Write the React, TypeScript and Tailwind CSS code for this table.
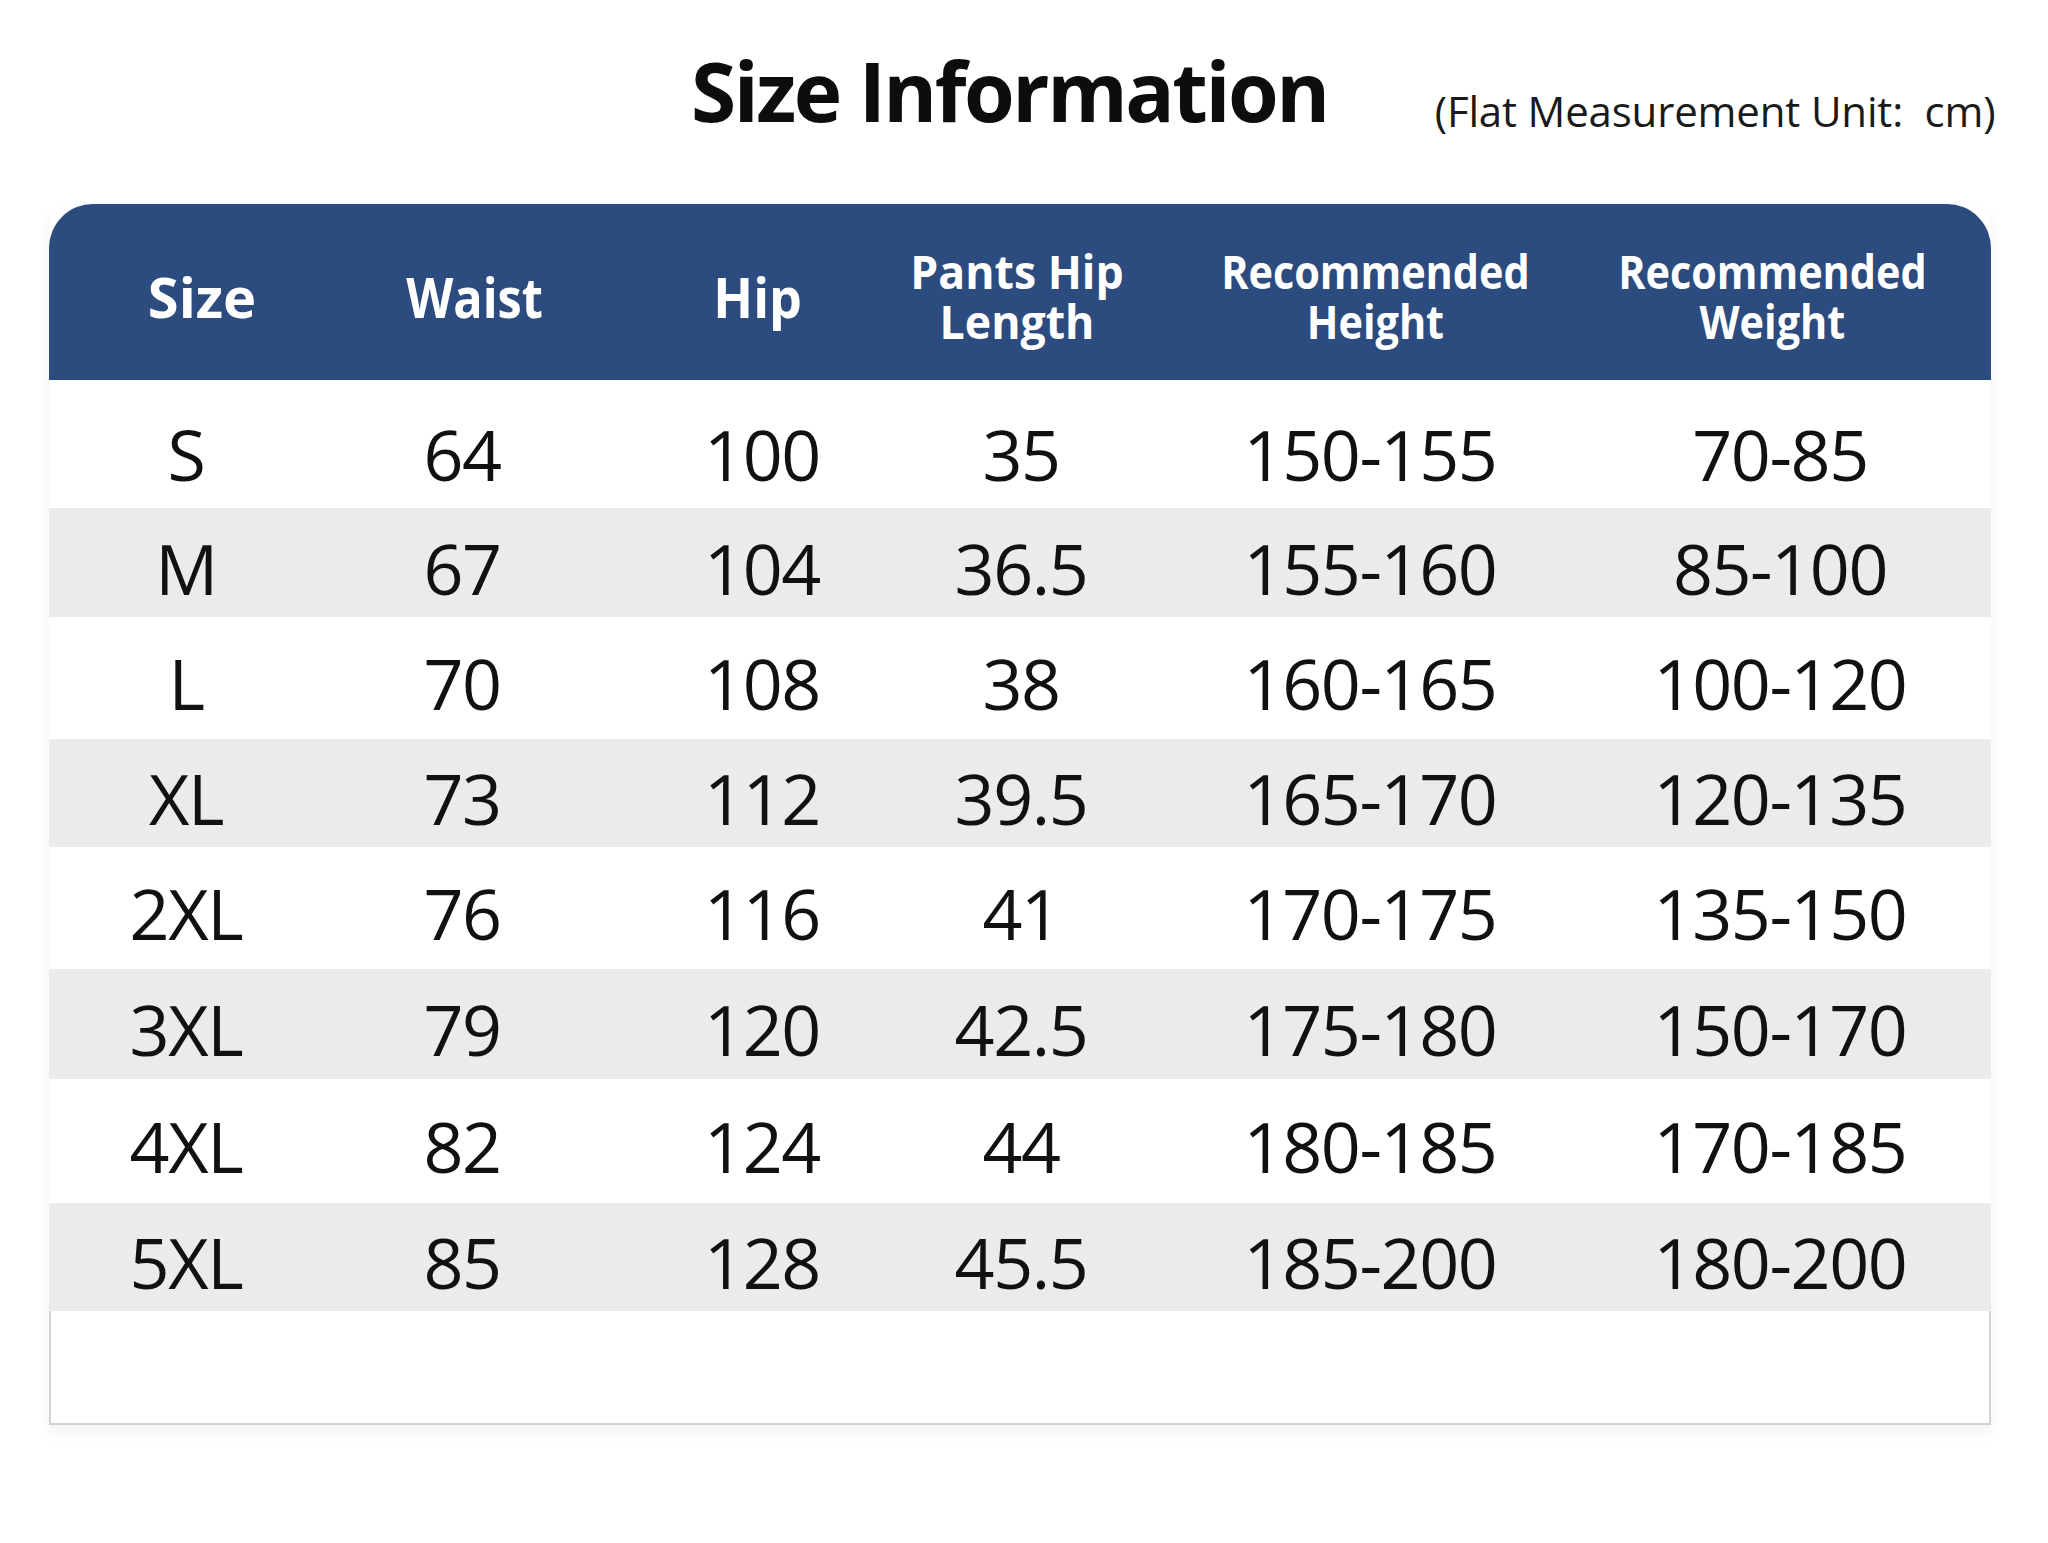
import React from "react";

const rows: { cells: string[]; gray: boolean; h: string; pt: string }[] = [
  { cells: ["S", "64", "100", "35", "150-155", "70-85"], gray: false, h: "h-[128px]", pt: "pt-[20px]" },
  { cells: ["M", "67", "104", "36.5", "155-160", "85-100"], gray: true, h: "h-[109px]", pt: "pt-[10px]" },
  { cells: ["L", "70", "108", "38", "160-165", "100-120"], gray: false, h: "h-[122px]", pt: "pt-[10px]" },
  { cells: ["XL", "73", "112", "39.5", "165-170", "120-135"], gray: true, h: "h-[108px]", pt: "pt-[10px]" },
  { cells: ["2XL", "76", "116", "41", "170-175", "135-150"], gray: false, h: "h-[122px]", pt: "pt-[10px]" },
  { cells: ["3XL", "79", "120", "42.5", "175-180", "150-170"], gray: true, h: "h-[110px]", pt: "pt-[10px]" },
  { cells: ["4XL", "82", "124", "44", "180-185", "170-185"], gray: false, h: "h-[124px]", pt: "pt-[10px]" },
  { cells: ["5XL", "85", "128", "45.5", "185-200", "180-200"], gray: true, h: "h-[108px]", pt: "pt-[10px]" },
];

const cols = "grid grid-cols-[274px_278px_322px_196px_502px_370px]";

function TwoLine({ a, b, narrow }: { a: string; b: string; narrow?: boolean }) {
  return (
    <div
      className={`flex flex-col items-center text-[46px] leading-[50px] whitespace-nowrap ${
        narrow ? "scale-x-[0.9]" : "scale-x-[0.97]"
      }`}
    >
      <span>{a}</span>
      <span>{b}</span>
    </div>
  );
}

export default function App() {
  return (
    <div className="w-[2048px] h-[1543px] bg-white overflow-hidden font-['Open_Sans','Noto_Sans',sans-serif] text-[#111111]">
      {/* Title row */}
      <div className="flex items-start pl-[691px] pt-[49px]">
        <h1 className="text-[82px] font-bold leading-none tracking-[-0.03em] text-[#0d0d0d]">
          Size Information
        </h1>
        <div className="ml-[107px] mt-[41px] text-[42px] leading-none tracking-[-0.004em] text-[#1a1a1a] whitespace-pre">
          (Flat Measurement Unit:  cm)
        </div>
      </div>

      {/* Table */}
      <div className="ml-[49px] mt-[72px] w-[1942px] shadow-[0_8px_14px_rgba(0,0,0,0.05)]">
        {/* Header */}
        <div className={`${cols} h-[176px] rounded-t-[44px] bg-[#2c4b7e] text-white font-bold pt-[8px]`}>
          <div className="flex items-center justify-center pl-[32px]">
            <span className="text-[56px] leading-none whitespace-nowrap">Size</span>
          </div>
          <div className="flex items-center justify-center pl-[26px]">
            <span className="inline-block text-[56px] leading-none whitespace-nowrap scale-x-[0.87]">Waist</span>
          </div>
          <div className="flex items-center justify-center pr-[8px]">
            <span className="inline-block text-[56px] leading-none whitespace-nowrap scale-x-[0.93]">Hip</span>
          </div>
          <div className="flex items-center justify-center pr-[8px]">
            <TwoLine a="Pants Hip" b="Length" />
          </div>
          <div className="flex items-center justify-center pl-[10px]">
            <TwoLine a="Recommended" b="Height" narrow />
          </div>
          <div className="flex items-center justify-center pr-[68px]">
            <TwoLine a="Recommended" b="Weight" narrow />
          </div>
        </div>

        {/* Body */}
        <div className="border-x-2 border-b-2 border-[#d2d2d2] bg-white">
          {rows.map((r, i) => (
            <div
              key={i}
              className={`${cols} -mx-[2px] ${r.h} ${r.pt} ${r.gray ? "bg-[#ebebeb]" : "bg-white"}`}
            >
              {r.cells.map((c, j) => (
                <div
                  key={j}
                  className={`flex items-center justify-center ${j === 5 ? "pr-[52px]" : ""}`}
                >
                  <span className="text-[70px] leading-none tracking-[-0.02em] whitespace-nowrap">{c}</span>
                </div>
              ))}
            </div>
          ))}
          <div className="h-[112px]" />
        </div>
      </div>
    </div>
  );
}
